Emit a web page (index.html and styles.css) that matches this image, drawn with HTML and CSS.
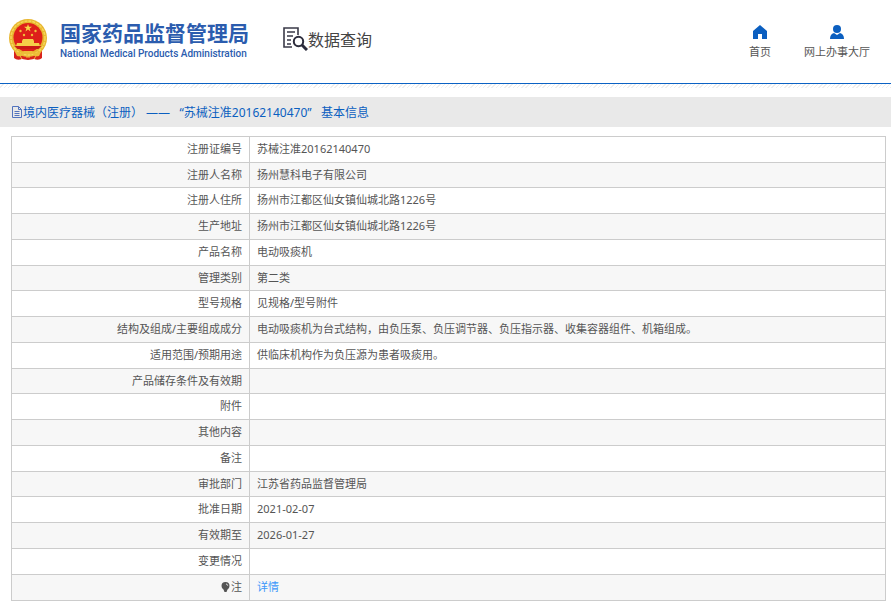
FILE: index.html
```
<!DOCTYPE html>
<html lang="zh-CN">
<head>
<meta charset="utf-8">
<meta name="viewport" content="width=device-width, initial-scale=1">
<title>国家药品监督管理局 数据查询</title>
<link rel="stylesheet" href="styles.css">
</head>
<body>
<header class="header">
  <div class="brand">
    <svg class="emblem" viewBox="0 0 38 42" aria-hidden="true">
      <path d="M5 30 L5 39 Q8 42 13 40 L19 41 L25 40 Q30 42 33 39 L33 30Z" fill="#d8231c"/>
      <circle cx="19" cy="19" r="19" fill="#e8b62f"/>
      <circle cx="19" cy="18.500" r="14.500" fill="#de1f1a"/>
      <circle cx="19" cy="19" r="17" fill="none" stroke="#f6d65a" stroke-width="1.500" stroke-dasharray="3 1"/>
      <path d="M19 5l1 2.700h3l-2.400 1.800.9 2.900-2.500-1.800-2.500 1.800.9-2.900L15 7.700h3z" fill="#f8d648"/>
      <g fill="#f0bf3a"><circle cx="11.500" cy="12" r="1.200"/><circle cx="26.500" cy="12" r="1.200"/><circle cx="15" cy="16" r="1.200"/><circle cx="23" cy="16" r="1.200"/></g>
      <path d="M13 22l1-2h10l1 2v2h5l1 3H7l1-3h5z" fill="#f5cf48"/>
      <path d="M5.500 27h27l-3 3h-21z" fill="#c91b17"/>
      <path d="M5 31Q12 36 15 32h8q3 4 10-1l-3 6q-5 1-6-2h-10q-1 3-6 2z" fill="#edbd38"/>
      <path d="M11 37l2 3M27 37l-2 3M17 38h4" stroke="#edbd38" fill="none"/>
    </svg>
    <div class="brand-text">
      <div class="brand-cn">国家药品监督管理局</div>
      <div class="brand-en">National Medical Products Administration</div>
    </div>
  </div>
  <div class="section">
    <svg class="section-icon" viewBox="0 0 25 24" aria-hidden="true">
      <path d="M15 8V1H1v19h8M4 5h8M4 9h6M4 13h4M4 17h4" fill="none" stroke="#3a3a48" stroke-width="1.600"/>
      <circle cx="15.500" cy="14.500" r="4.700" fill="#fff" stroke="#2c2c3c" stroke-width="2"/>
      <path d="M19 18l5 5" stroke="#2c2c3c" stroke-width="3"/>
    </svg>
    <span>数据查询</span>
  </div>
  <nav class="nav">
    <a href="#home">
      <svg viewBox="0 0 16 16" aria-hidden="true"><path d="M8 1l7 6v8h-5v-5H6v5H1V7z" fill="#0b5fc0"/></svg>
      <span>首页</span>
    </a>
    <a href="#hall">
      <svg viewBox="0 0 16 16" aria-hidden="true"><circle cx="8" cy="5" r="4" fill="#0b5fc0"/><path d="M1 15q0-5 4-6l3 2 3-2q4 1 4 6z" fill="#0b5fc0"/></svg>
      <span>网上办事大厅</span>
    </a>
  </nav>
</header>
<div class="stripe"></div>
<main>
  <h1 class="title">
    <svg viewBox="0 0 12 12" aria-hidden="true"><path d="M1.500.500h6l3 3v8h-9zM7.500.500v3h3M3.500 5.500h5M3.500 7.500h5M3.500 9.500h5" fill="none" stroke="#5273bd"/></svg>
    <span>境内医疗器械（注册） ——&nbsp;&nbsp; “苏械注准20162140470”&nbsp;&nbsp; 基本信息</span>
  </h1>
  <table class="info">
    <tr><th scope="row">注册证编号</th><td>苏械注准20162140470</td></tr>
    <tr><th scope="row">注册人名称</th><td>扬州慧科电子有限公司</td></tr>
    <tr><th scope="row">注册人住所</th><td>扬州市江都区仙女镇仙城北路1226号</td></tr>
    <tr><th scope="row">生产地址</th><td>扬州市江都区仙女镇仙城北路1226号</td></tr>
    <tr><th scope="row">产品名称</th><td>电动吸痰机</td></tr>
    <tr><th scope="row">管理类别</th><td>第二类</td></tr>
    <tr><th scope="row">型号规格</th><td>见规格/型号附件</td></tr>
    <tr><th scope="row">结构及组成/主要组成成分</th><td>电动吸痰机为台式结构，由负压泵、负压调节器、负压指示器、收集容器组件、机箱组成。</td></tr>
    <tr><th scope="row">适用范围/预期用途</th><td>供临床机构作为负压源为患者吸痰用。</td></tr>
    <tr><th scope="row">产品储存条件及有效期</th><td></td></tr>
    <tr><th scope="row">附件</th><td></td></tr>
    <tr><th scope="row">其他内容</th><td></td></tr>
    <tr><th scope="row">备注</th><td></td></tr>
    <tr><th scope="row">审批部门</th><td>江苏省药品监督管理局</td></tr>
    <tr><th scope="row">批准日期</th><td>2021-02-07</td></tr>
    <tr><th scope="row">有效期至</th><td>2026-01-27</td></tr>
    <tr><th scope="row">变更情况</th><td></td></tr>
    <tr><th scope="row"><svg class="bulb" viewBox="0 0 9 10" aria-hidden="true"><path d="M4.500 0a4 4 0 0 1 4 4q0 2-2 3.500L5.500 10h-2l-1-2.500Q.500 6 .500 4a4 4 0 0 1 4-4z" fill="#555"/><path d="M5 2q1.500 0 1.700 1.700" stroke="#ddd" fill="none"/></svg>注</th><td><a href="#detail">详情</a></td></tr>
  </table>
</main>
</body>
</html>
```
FILE: styles.css
```
* {
  box-sizing: border-box;
}

body {
  margin: 0;
  background: #fff;
  color: #555;
  font-family: "Noto Sans", "Noto Sans CJK SC", sans-serif;
  font-size: 11px;
}

a {
  color: #3b97fa;
  text-decoration: none;
}

.header {
  display: flex;
  align-items: center;
  height: 83px;
  padding: 0 21px 4px 9px;
}

.brand {
  display: flex;
  align-items: center;
  gap: 13px;
}

.emblem {
  width: 38px;
  height: 42px;
}

.brand-text {
  color: #2b5cae;
  white-space: nowrap;
}

.brand-cn {
  font-family: "Noto Sans CJK SC", sans-serif;
  font-size: 21px;
  font-weight: 700;
  line-height: 26px;
}

.brand-en {
  padding-top: 2px;
  font-family: Roboto, sans-serif;
  font-size: 10px;
  font-weight: 500;
  line-height: 14px;
}

.section {
  display: flex;
  align-items: center;
  margin-left: 34px;
  padding-bottom: 1px;
  color: #444;
  font-family: "Noto Sans CJK SC", sans-serif;
  font-size: 16px;
  line-height: 24px;
  white-space: nowrap;
}

.section-icon {
  width: 25px;
  height: 24px;
}

.nav {
  display: flex;
  gap: 33px;
  margin-left: auto;
  padding-top: 4px;
}

.nav a {
  display: flex;
  flex-direction: column;
  align-items: center;
  color: #555;
  line-height: 16px;
  white-space: nowrap;
}

.nav svg {
  width: 16px;
  height: 16px;
  margin-bottom: 4px;
}

.stripe {
  height: 5px;
  border-top: 1px solid #0b62c4;
  background: repeating-linear-gradient(135deg, #fff 0 2px, #eee 2px 3px);
}

.title {
  display: flex;
  align-items: center;
  height: 30px;
  margin: 9px 0;
  padding-left: 11px;
  background: #e9e9e9;
  color: #0b5fc0;
  font-size: 12px;
  font-weight: 400;
}

.title svg {
  width: 12px;
  height: 12px;
}

.info {
  width: calc(100% - 16px);
  margin: 0 5px 4px 11px;
  border-collapse: collapse;
}

.info th,
.info td {
  height: 26px;
  padding: 0 7px 1px;
  border: 1px solid #ccc;
  font-weight: 400;
  line-height: 16px;
  text-align: left;
}

.info th {
  width: 238px;
  text-align: right;
}

.info tr:nth-child(even) {
  background: #f7f7f7;
}

.info tr:nth-child(4n + 2):not(:last-child) > * {
  height: 25px;
}

.bulb {
  width: 9px;
  height: 10px;
  margin-right: 1px;
  vertical-align: -1px;
}
```
